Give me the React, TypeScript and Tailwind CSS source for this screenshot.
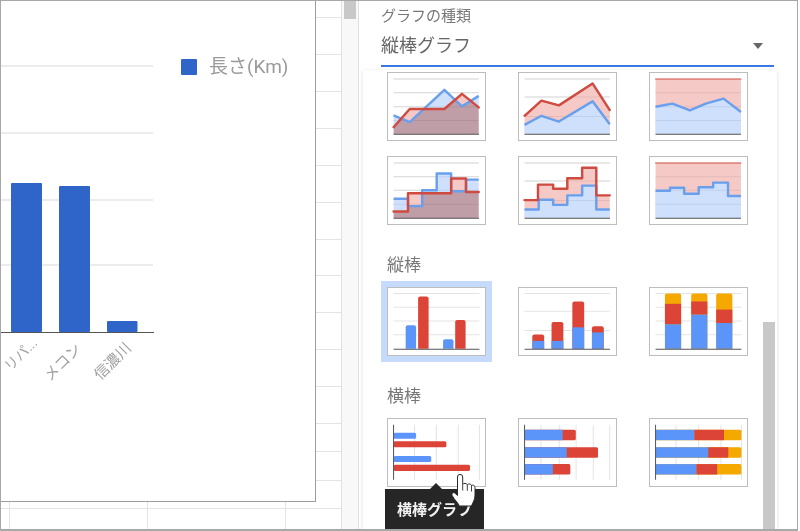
import React, { useId } from "react";

const BLUE = "#5b95f9";
const RED = "#db4437";
const YEL = "#f4a800";
const LBLUE = "#6a9fee";
const LRED = "#cf4a3f";
const GRID = "#e4e4e4";
const AXIS = "#555";

type P = [number, number];
const pts = (a: P[]) => a.map((p) => p.join(",")).join(" ");
const area = (a: P[], base: number) => pts([[a[0][0], base], ...a, [a[a.length - 1][0], base]]);
const steps = (a: [number, number, number][]) => {
  const out: P[] = [];
  a.forEach(([x1, x2, y]) => {
    out.push([x1, y]);
    out.push([x2, y]);
  });
  return out;
};

function HGrid({ ys, x1 = 7, x2 = 91.5, color = GRID }: { ys: number[]; x1?: number; x2?: number; color?: string }) {
  return (
    <>
      {ys.map((y) => (
        <line key={y} x1={x1} x2={x2} y1={y} y2={y} stroke={color} strokeWidth="1" />
      ))}
    </>
  );
}
function VGrid({ xs }: { xs: number[] }) {
  return (
    <>
      {xs.map((x) => (
        <line key={x} x1={x} x2={x} y1={7} y2={61.5} stroke={GRID} strokeWidth="1" />
      ))}
    </>
  );
}
const BaseX = ({ x2 = 91.5 }: { x2?: number }) => <line x1={7} x2={x2} y1={62} y2={62} stroke={AXIS} strokeWidth="1" />;
const BaseY = () => <line x1={7} x2={7} y1={7} y2={61.5} stroke={AXIS} strokeWidth="1" />;

function Lines({ blue, red, grid, mode }: { blue: P[]; red: P[]; grid: number[]; mode: "overlap" | "stack" | "full" }) {
  const id = useId();
  return (
    <>
      <HGrid ys={grid} />
      {mode === "overlap" ? (
        <>
          <polygon points={area(blue, 62)} fill="#cfe0fc" />
          <polygon points={area(red, 62)} fill="#f5c9c5" />
          <clipPath id={id}>
            <polygon points={area(red, 62)} />
          </clipPath>
          <polygon points={area(blue, 62)} fill="#bf9ea8" clipPath={`url(#${id})`} />
        </>
      ) : (
        <>
          <polygon points={area(red, 62)} fill="#f5c9c5" />
          <polygon points={area(blue, 62)} fill="#cfe0fc" />
        </>
      )}
      <HGrid ys={grid} color="rgba(0,0,0,0.07)" />
      <polyline points={pts(blue)} fill="none" stroke={LBLUE} strokeWidth="2.4" strokeLinejoin="round" />
      <polyline
        points={pts(red)}
        fill="none"
        stroke={LRED}
        strokeWidth={mode === "full" ? 1 : 2.4}
        strokeLinejoin="round"
        strokeLinecap="round"
      />
      <BaseX />
    </>
  );
}

function Bar({ x, w, top, color, base = 61.5 }: { x: number; w: number; top: number; color: string; base?: number }) {
  return <path d={`M${x} ${base}V${top + 2}q0-2 2-2H${x + w - 2}q2 0 2 2V${base}Z`} fill={color} />;
}
function HBar({ x, end, y, h, color }: { x: number; end: number; y: number; h: number; color: string }) {
  return <rect x={x} width={end - x} y={y} height={h} fill={color} rx="1.5" />;
}

const thumbs: React.ReactNode[] = [
  <Lines
    mode="overlap"
    grid={[7.3, 21, 34.7, 48.4]}
    blue={[[7, 43.3], [23, 50], [57.3, 18], [74.7, 34.4], [91.3, 24]]}
    red={[[7, 55], [23, 37], [57.3, 37], [74.7, 22], [91.3, 35.4]]}
  />,
  <Lines
    mode="stack"
    grid={[7.3, 25, 44.4]}
    blue={[[7, 52.7], [23.7, 43.7], [41, 49.4], [74.3, 29.4], [91.3, 52]]}
    red={[[7, 43.7], [23.7, 28.7], [41, 33.4], [74.3, 11.7], [91.3, 38]]}
  />,
  <Lines
    mode="full"
    grid={[21, 34.7, 48.4]}
    blue={[[7, 34.7], [23.7, 31.7], [41, 38.4], [56.7, 31.7], [74.3, 26.7], [91.5, 40]]}
    red={[[7, 7.3], [91.5, 7.3]]}
  />,
  <Lines
    mode="overlap"
    grid={[7.3, 21, 34.3, 48]}
    blue={steps([[7, 21.3, 42.7], [21.3, 35.3, 50], [35.3, 49.7, 34.3], [49.7, 64, 17.7], [64, 78.7, 35.3], [78.7, 91.3, 23.7]])}
    red={steps([[7, 21.3, 55.3], [21.3, 64, 37.3], [64, 78.7, 22.7], [78.7, 91.3, 36]])}
  />,
  <Lines
    mode="stack"
    grid={[7.3, 25, 44.3]}
    blue={steps([[7, 21, 53.3], [21, 35.3, 43.7], [35.3, 49.3, 48.7], [49.3, 64, 39.3], [64, 78, 29.7], [78, 91.3, 53.3]])}
    red={steps([[7, 20.3, 44], [20.3, 35.3, 28.7], [35.3, 49.3, 32.7], [49.3, 64, 22.3], [64, 78, 12], [78, 91.3, 39.3]])}
  />,
  <Lines
    mode="full"
    grid={[21, 34.3, 48]}
    blue={steps([[7, 21.3, 34.7], [21.3, 35.3, 31.7], [35.3, 49.7, 37.7], [49.7, 64, 31.3], [64, 78.7, 26.7], [78.7, 91.5, 40]])}
    red={[[7, 7.3], [91.5, 7.3]]}
  />,
  <>
    <HGrid ys={[6.7, 20.3, 34, 47.7]} x2={92} />
    <Bar x={19} w={10.3} top={38.3} color={BLUE} />
    <Bar x={31.3} w={10.4} top={9.7} color={RED} />
    <Bar x={56} w={10.3} top={52} color={BLUE} />
    <Bar x={68} w={10.3} top={33} color={RED} />
    <BaseX x2={92} />
  </>,
  <>
    <HGrid ys={[6.7, 24.3, 43.3]} />
    {[
      [14.7, 53.7, 47.3],
      [33.7, 53.7, 35],
      [54.3, 40.3, 14.7],
      [73.7, 45.3, 39.3],
    ].map(([x, b, r]) => (
      <g key={x}>
        <Bar x={x} w={11.7} top={r} color={RED} />
        <rect x={x} y={b} width={11.7} height={61.5 - b} fill={BLUE} />
      </g>
    ))}
    <BaseX />
  </>,
  <>
    <HGrid ys={[6.7, 20.3, 34, 47.7]} x2={92} />
    {[
      [16.3, 37.3, 17],
      [42.3, 27.7, 14.7],
      [67, 36, 22.7],
    ].map(([x, b, r]) => (
      <g key={x}>
        <Bar x={x} w={16} top={6.7} color={YEL} />
        <rect x={x} y={r} width={16} height={b - r} fill={RED} />
        <rect x={x} y={b} width={16} height={61.5 - b} fill={BLUE} />
      </g>
    ))}
    <BaseX x2={92} />
  </>,
  <>
    <VGrid xs={[27.7, 49.3, 71, 92]} />
    <HBar x={7} end={29.3} y={15} h={6} color={BLUE} />
    <HBar x={7} end={59.3} y={23.3} h={6} color={RED} />
    <HBar x={7} end={44.3} y={38} h={6} color={BLUE} />
    <HBar x={7} end={82.7} y={46.7} h={6} color={RED} />
    <BaseY />
  </>,
  <>
    <VGrid xs={[23.3, 41.3, 58, 75, 91.3]} />
    {[
      [12, 44.7, 57.7],
      [29.3, 48.7, 79.7],
      [46, 35, 52.3],
    ].map(([y, b, r]) => (
      <g key={y}>
        <HBar x={7} end={r} y={y} h={10.3} color={RED} />
        <rect x={7} y={y} width={b - 7} height={10.3} fill={BLUE} />
      </g>
    ))}
    <BaseY />
  </>,
  <>
    <VGrid xs={[27.3, 49.7, 71.7, 92]} />
    {[
      [12, 45.3, 74.7],
      [29.3, 59, 79],
      [46, 47.3, 68],
    ].map(([y, b, r]) => (
      <g key={y}>
        <HBar x={7} end={92} y={y} h={10.3} color={YEL} />
        <rect x={b} y={y} width={r - b} height={10.3} fill={RED} />
        <rect x={7} y={y} width={b - 7} height={10.3} fill={BLUE} />
      </g>
    ))}
    <BaseY />
  </>,
];

function Thumb({ i, selected, children }: { i: number; selected?: boolean; children?: React.ReactNode }) {
  return (
    <div
      className={
        "relative h-[69px] w-[99px] border-[1.5px] border-[#bdbdbd] bg-white " +
        (selected ? "outline-[6px] outline-solid outline-[#c6dafc]" : "")
      }
    >
      <svg viewBox="1.5 1.5 96 66" className="block h-full w-full">
        {thumbs[i]}
      </svg>
      {children}
    </div>
  );
}

const rowHeights = [
  "h-[17px]", "h-[37px]", "h-[37px]", "h-[37px]", "h-[37px]", "h-[37px]", "h-[37px]", "h-[36px]",
  "h-[37px]", "h-[37px]", "h-[37px]", "h-[37px]", "h-[28px]", "h-[29px]", "h-[28px]", "h-[21px]",
];

function Sheet() {
  return (
    <div className="relative h-full w-[341px] shrink-0 border-r border-[#e0e0e0]">
      {rowHeights.map((h, i) => (
        <div key={i} className={"flex border-b-[1.5px] border-[#e4e4e4] " + h}>
          <div className="w-[9px] border-r-[1.5px] border-[#e4e4e4]" />
          <div className="w-[138px] border-r-[1.5px] border-[#e4e4e4]" />
          <div className="w-[138px] border-r-[1.5px] border-[#e4e4e4]" />
        </div>
      ))}
      <div className="absolute left-0 top-0 flex h-[501px] w-[315px] border-b border-r border-[#9c9c9c] bg-white">
        <svg viewBox="1 1 170 500" className="h-[500px] w-[170px] shrink-0">
          {[66, 133, 200, 265].map((y) => (
            <line key={y} x1="1" x2="153" y1={y} y2={y} stroke="#d9d9d9" strokeWidth="1" />
          ))}
          <rect x="11" y="183" width="31" height="149" rx="1" fill="#2f64c9" />
          <rect x="59" y="186" width="31" height="146" rx="1" fill="#2f64c9" />
          <rect x="107" y="321" width="30.5" height="11" rx="1" fill="#2f64c9" />
          <line x1="1" x2="154" y1="332.5" y2="332.5" stroke="#555" strokeWidth="1" />
          <g fontSize="15" fill="#a0a0a0" textAnchor="end">
            <text fontSize="14" transform="translate(38 344) rotate(-45)">リパ...</text>
            <text transform="translate(82 350) rotate(-45)">メコン</text>
            <text transform="translate(132 349) rotate(-45)">信濃川</text>
          </g>
        </svg>
        <div className="ml-[10px] mt-[55px] flex h-[22px] items-center gap-[12px] text-[19px] leading-[22px] text-[#9a9a9a]">
          <span className="h-[16px] w-[16px] rounded-[1px] bg-[#2f64c9]" />
          <span>長さ(Km)</span>
        </div>
      </div>
    </div>
  );
}

function Scroll() {
  return (
    <div className="h-full w-[17px] shrink-0 border-r border-[#e0e0e0] bg-[#f8f8f8] pl-[2px]">
      <div className="h-[18px] w-[12px] bg-[#c8c8c8]" />
    </div>
  );
}

function Hand() {
  return (
    <svg viewBox="0 0 25 33" className="absolute left-[63px] top-[55px] z-20 h-[33px] w-[25px]">
      <path
        d="M6.5 3a2.6 2.6 0 0 1 5.2 0v7.5c.6-1.6 4-1.6 4.6.3.9-1.4 3.7-1.1 4.2.7 1.3-.8 3.5-.2 3.5 2V21c0 5-2 7-3.5 11H8.5C6.5 28 3.5 26 1.2 21.5c-1-2 .9-3.6 2.7-2.4l2.6 2.4Z"
        fill="#fff"
        stroke="#2a2a2a"
        strokeWidth="1"
        strokeLinejoin="round"
      />
      <path d="M11.7 10.5v6M16.3 10.8v6M20.5 11.5v6" fill="none" stroke="#2a2a2a" strokeWidth="0.9" />
    </svg>
  );
}

function Menu() {
  return (
    <div className="absolute left-[4px] top-[69px] h-[470px] w-[414px] bg-white pl-[24px] pt-[2px] shadow-[0_1px_4px_rgba(0,0,0,0.14)]">
      <div className="grid w-[361px] grid-cols-[99px_99px_99px] gap-x-[32px] gap-y-[15px]">
        {[0, 1, 2, 3, 4, 5].map((i) => (
          <Thumb key={i} i={i} />
        ))}
      </div>
      <div className="mb-[11px] mt-[29px] h-[22px] text-[17px] leading-[22px] text-[#777]">縦棒</div>
      <div className="grid w-[361px] grid-cols-[99px_99px_99px] gap-x-[32px]">
        {[6, 7, 8].map((i) => (
          <Thumb key={i} i={i} selected={i === 6} />
        ))}
      </div>
      <div className="mb-[11px] mt-[29px] h-[22px] text-[17px] leading-[22px] text-[#777]">横棒</div>
      <div className="grid w-[361px] grid-cols-[99px_99px_99px] gap-x-[32px]">
        <Thumb i={9}>
          <Hand />
          <div className="absolute left-[-3px] top-[70px] z-10 h-[44px] w-[99px] bg-[#262626] pt-[10px] text-center text-[15px] font-bold leading-[22px] text-[#f2f2f2]">
            <span className="absolute left-[45px] top-[-6px] h-0 w-0 border-x-[6px] border-b-[6px] border-x-transparent border-b-[#262626]" />
            横棒グラフ
          </div>
        </Thumb>
        <Thumb i={10} />
        <Thumb i={11} />
      </div>
      <div className="absolute left-[400px] top-[252px] h-[220px] w-[12px] bg-[#c8c8c8]" />
    </div>
  );
}

export default function App() {
  return (
    <div className="flex h-[531px] w-[798px] overflow-hidden border-b-2 border-l border-r border-t border-[#a8a8a8] bg-white font-['Roboto','Noto_Sans_CJK_JP',sans-serif] blur-[0.5px]">
      <Sheet />
      <Scroll />
      <div className="relative flex-1 pl-[22px] pt-[4px]">
        <div className="h-[22px] text-[15px] leading-[22px] text-[#777]">グラフの種類</div>
        <div className="mt-[6px] flex h-[34px] w-[393px] items-center justify-between border-b-2 border-[#3b78e7] pb-[6px] pr-[11px]">
          <span className="text-[18px] leading-[26px] text-[#666]">縦棒グラフ</span>
          <svg viewBox="0 0 10 6" className="h-[6px] w-[10px]">
            <path d="M0 0h10L5 6Z" fill="#666" />
          </svg>
        </div>
        <Menu />
      </div>
    </div>
  );
}
